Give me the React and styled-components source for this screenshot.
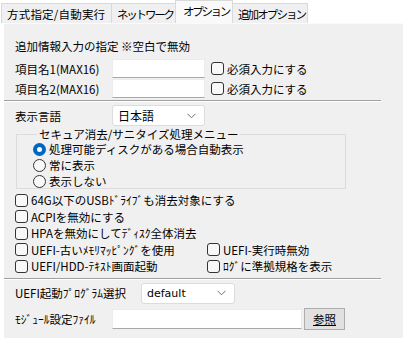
import React, { useState } from 'react';
import styled, { createGlobalStyle } from 'styled-components';

const GlobalStyle = createGlobalStyle`
  html, body {
    margin: 0;
    padding: 0;
    background: #ffffff;
  }
  body {
    font-family: "Noto Sans CJK JP", "Noto Sans", sans-serif;
    font-size: 11.5px;
    color: #000;
  }
`;

const Window = styled.div`
  width: 406px;
  height: 343px;
  padding: 0 3px 0 4px;
  box-sizing: border-box;
  background: #ffffff;
`;

const TabBar = styled.div`
  display: flex;
  align-items: flex-end;
  height: 23px;
  margin-left: -2px;
`;

const Tab = styled.div`
  width: ${p => p.w}px;
  height: ${p => (p.active ? 23 : 20)}px;
  box-sizing: border-box;
  display: flex;
  align-items: center;
  padding-left: ${p => (p.active ? 7 : 5)}px;
  padding-bottom: ${p => (p.active ? 2 : 0)}px;
  background: ${p => (p.active ? '#f9f9f9' : '#f0f0f0')};
  border: 1px solid #d9d9d9;
  border-bottom: none;
  margin-left: -1px;
  font-size: 11.5px;
  letter-spacing: ${p => p.ls || 0}px;
  white-space: nowrap;
  overflow: hidden;
  position: relative;
  z-index: ${p => (p.active ? 1 : 0)};
`;

const Panel = styled.div`
  height: 315px;
  box-sizing: border-box;
  background: #f0f0f0;
  border-top: 1px solid #fafafa;
  padding: 14px 11px 0 11px;
`;

const Heading = styled.div`
  height: 16px;
  line-height: 16px;
  white-space: nowrap;
`;

const Row = styled.div`
  display: flex;
  align-items: center;
  height: ${p => p.h || 19}px;
  margin-top: ${p => p.mt || 0}px;
  white-space: nowrap;
`;

const Label = styled.div`
  width: ${p => p.w || 97}px;
  flex: none;
  line-height: 16px;
`;

const TextBox = styled.div`
  width: ${p => p.w}px;
  height: ${p => p.h || 19}px;
  box-sizing: border-box;
  background: #ffffff;
  border: 1px solid #ececec;
  border-bottom-color: #a8a8a8;
  flex: none;
`;

const Separator = styled.div`
  height: 1px;
  margin: ${p => p.mt}px 11px 0 -11px;
  background: #a0a0a0;
  border-bottom: 1px solid #ffffff;
`;

const CheckWrap = styled.label`
  display: flex;
  align-items: center;
  gap: 3px;
  height: ${p => p.h || 16}px;
  margin-left: ${p => p.ml || 0}px;
  white-space: nowrap;
  line-height: 16px;
`;

const Box = styled.span`
  width: 13px;
  height: 13px;
  box-sizing: border-box;
  border: 1px solid #333;
  border-radius: 3px;
  background: #f8f8f8;
  flex: none;
`;

const Select = styled.div`
  width: ${p => p.w}px;
  height: 21px;
  box-sizing: border-box;
  background: #ffffff;
  border: 1px solid #dcdcdc;
  border-radius: 3px;
  display: flex;
  align-items: center;
  justify-content: space-between;
  padding: 0 8px 0 5px;
  flex: none;
  font-family: ${p => (p.latin ? '"DejaVu Sans", "Noto Sans", sans-serif' : 'inherit')};
  font-size: ${p => (p.latin ? 11 : 12)}px;
`;

const Group = styled.fieldset`
  margin: 1px 0 0 1px;
  width: 330px;
  box-sizing: border-box;
  border: 1px solid #dcdcdc;
  padding: 0 0 0 16px;
  height: 62px;
`;

const Legend = styled.legend`
  padding: 0 2px;
  margin-left: 4px;
  height: 14px;
  line-height: 14px;
  white-space: nowrap;
`;

const RadioList = styled.div`
  display: flex;
  flex-direction: column;
`;

const Radio = styled.span`
  width: 13px;
  height: 13px;
  box-sizing: border-box;
  border-radius: 50%;
  flex: none;
  border: ${p => (p.on ? '4px solid #0067c0' : '1px solid #333')};
  background: ${p => (p.on ? '#ffffff' : '#f8f8f8')};
`;

const CheckGrid = styled.div`
  display: grid;
  grid-template-columns: 192px auto;
  grid-auto-rows: 16.5px;
  margin-top: 3px;
`;

const Full = styled.div`
  grid-column: 1 / span 2;
`;

const Button = styled.div`
  width: 41px;
  height: 22px;
  box-sizing: border-box;
  margin-left: 2px;
  background: #e1e1e1;
  border: 1px solid #adadad;
  display: flex;
  align-items: center;
  justify-content: center;
  font-size: 11.5px;
  text-decoration: underline;
  text-underline-offset: 1px;
`;

const Chevron = () => (
  <svg width="9" height="6" viewBox="0 0 9 6">
    <path d="M0.5 0.8 L4.5 4.8 L8.5 0.8" fill="none" stroke="#707070" strokeWidth="1" />
  </svg>
);

const Check = ({ children, ml }) => (
  <CheckWrap ml={ml}>
    <Box />
    <span>{children}</span>
  </CheckWrap>
);

const tabs = [
  { label: '方式指定/自動実行', w: 111, ls: 0.2 },
  { label: 'ネットワーク', w: 65, ls: -2.2 },
  { label: 'オプション', w: 58, ls: -2.3 },
  { label: '追加オプション', w: 76, ls: -1.9 },
];

const radios = ['処理可能ディスクがある場合自動表示', '常に表示', '表示しない'];

export default function App() {
  const [active] = useState(2);
  const [mode] = useState(0);

  return (
    <Window>
      <GlobalStyle />
      <TabBar>
        {tabs.map((t, i) => (
          <Tab key={t.label} w={t.w} ls={t.ls} active={i === active}>
            {t.label}
          </Tab>
        ))}
      </TabBar>
      <Panel>
        <Heading>追加情報入力の指定 ※空白で無効</Heading>
        <Row mt={5}>
          <Label>項目名1(MAX16)</Label>
          <TextBox w={93} />
          <Check ml={6}>必須入力にする</Check>
        </Row>
        <Row mt={1}>
          <Label>項目名2(MAX16)</Label>
          <TextBox w={93} />
          <Check ml={6}>必須入力にする</Check>
        </Row>
        <Separator mt={2} />
        <Row h={21} mt={3}>
          <Label>表示言語</Label>
          <Select w={93}>
            <span>日本語</span>
            <Chevron />
          </Select>
        </Row>
        <Group>
          <Legend>セキュア消去/サニタイズ処理メニュー</Legend>
          <RadioList>
            {radios.map((r, i) => (
              <CheckWrap key={r}>
                <Radio on={i === mode} />
                <span>{r}</span>
              </CheckWrap>
            ))}
          </RadioList>
        </Group>
        <CheckGrid>
          <Full><Check>64G以下のUSBﾄﾞﾗｲﾌﾞも消去対象にする</Check></Full>
          <Full><Check>ACPIを無効にする</Check></Full>
          <Full><Check>HPAを無効にしてﾃﾞｨｽｸ全体消去</Check></Full>
          <Check>UEFI-古いﾒﾓﾘﾏｯﾋﾟﾝｸﾞを使用</Check>
          <Check>UEFI-実行時無効</Check>
          <Check>UEFI/HDD-ﾃｷｽﾄ画面起動</Check>
          <Check>ﾛｸﾞに準拠規格を表示</Check>
        </CheckGrid>
        <Separator mt={3} />
        <Row h={21} mt={3}>
          <Label w={126}>UEFI起動ﾌﾟﾛｸﾞﾗﾑ選択</Label>
          <Select w={94} latin>
            <span>default</span>
            <Chevron />
          </Select>
        </Row>
        <Row h={22} mt={4}>
          <Label>ﾓｼﾞｭｰﾙ設定ﾌｧｲﾙ</Label>
          <TextBox w={190} h={20} />
          <Button>参照</Button>
        </Row>
      </Panel>
    </Window>
  );
}
